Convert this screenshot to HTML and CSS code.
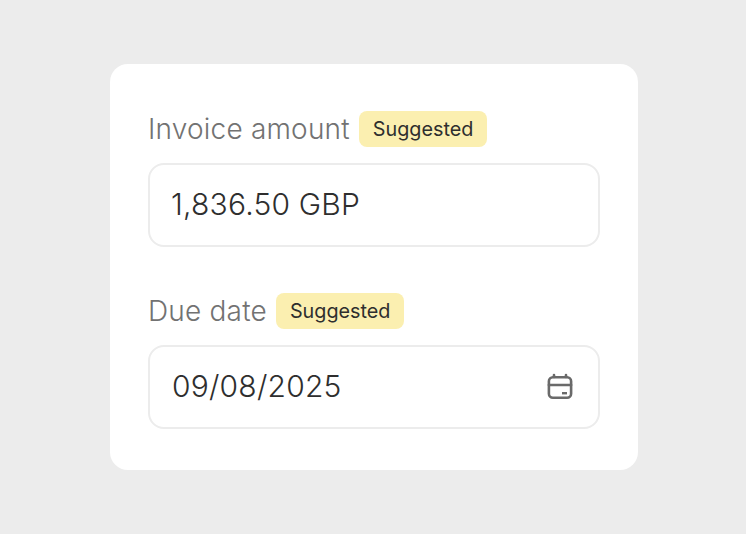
FILE: index.html
```html
<!DOCTYPE html>
<html lang="en">
<head>
<meta charset="utf-8">
<title>Invoice</title>
<link rel="stylesheet" href="styles.css">
</head>
<body>
<main class="card">
  <section class="field">
    <div class="label-row"><span class="label">Invoice amount</span><span class="badge">Suggested</span></div>
    <div class="input">1,836.50 GBP</div>
  </section>
  <section class="field">
    <div class="label-row"><span class="label">Due date</span><span class="badge">Suggested</span></div>
    <div class="input input-date"><span>09/08/2025</span>
      <svg class="icon" width="28" height="28" viewBox="0 0 28 28" fill="none" stroke="#6a6a6a" stroke-width="2.6" stroke-linecap="round" stroke-linejoin="round"><rect x="2.9" y="4.3" width="22.2" height="20.4" rx="4"/><path d="M2.9 12h22.2M8 2v2M20 2v2"/><rect x="16" y="19" width="5" height="2.4" fill="#6a6a6a" stroke="none"/></svg>
    </div>
  </section>
</main>
</body>
</html>
```
FILE: styles.css
```css
* { box-sizing: border-box; }
html, body { margin: 0; height: 100%; }
body {
  width: 746px; height: 534px; background: #ececec;
  font-family: Inter, sans-serif;
  display: flex; align-items: center; justify-content: center;
  padding-left: 2px;
}
.card {
  width: 528px; height: 406px; background: #fff; border-radius: 18px;
  padding: 47px 38px 41px;
  display: flex; flex-direction: column; gap: 46px;
}
.field { display: flex; flex-direction: column; gap: 16px; }
.label-row { display: flex; align-items: center; gap: 9.5px; height: 36px; }
.label { font-size: 28px; font-weight: 350; letter-spacing: 0.2px; color: #727272; }
.badge {
  height: 36px; padding: 0 14px 0 13.5px; background: #fbefb0; border-radius: 8px;
  font-size: 19.8px; color: #2e2e2e; display: flex; align-items: center;
}
.input {
  height: 84px; border: 2px solid #ececec; border-radius: 16px;
  padding: 0 24px 2px 21px; font-size: 30px; font-weight: 350; letter-spacing: 0.2px; color: #2e2e2e;
  display: flex; align-items: center; justify-content: space-between;
}
.input-date { padding-left: 22px; }
.icon { display: block; margin-top: 2px; }
```
